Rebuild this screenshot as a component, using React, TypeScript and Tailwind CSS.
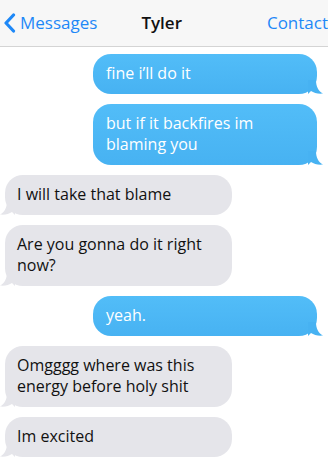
import React from "react"

type Msg = { from: "me" | "them"; text: string }

const messages: Msg[] = [
	{ from: "me", text: "fine i’ll do it" },
	{ from: "me", text: "but if it backfires im blaming you" },
	{ from: "them", text: "I will take that blame" },
	{ from: "them", text: "Are you gonna do it right now?" },
	{ from: "me", text: "yeah." },
	{ from: "them", text: "Omgggg where was this energy before holy shit" },
	{ from: "them", text: "Im excited" },
]

const font = { fontFamily: '"Open Sans", "Noto Sans", sans-serif' }

const Bubble: React.FC<{ msg: Msg }> = ({ msg }) => {
	if (msg.from === "me") {
		return (
			<div className="relative ml-[93px] w-[224px]">
				<div className="rounded-[18px] bg-gradient-to-b from-[#52bdf8] to-[#47b2f2] pl-[13px] pr-3 pt-[9px] pb-[10px] text-[16px] leading-[21px] text-white">
					{msg.text}
				</div>
				<svg className="absolute -right-[7px] bottom-0" width="16" height="14" viewBox="0 0 16 14">
					<path d="M0 0 L8 0 C8 6 10 11 15 13.5 C10 14 6 13 3 11 L0 14 Z" fill="#47b2f2" />
				</svg>
			</div>
		)
	}
	return (
		<div className="relative ml-[5px] w-[227px]">
			<div className="rounded-[18px] bg-[#e5e5ea] pl-3 pr-3 pt-[9px] pb-[10px] text-[16px] leading-[21px] text-[#111]">
				{msg.text}
			</div>
			<svg className="absolute -left-[6px] bottom-0" width="16" height="14" viewBox="0 0 16 14">
				<path d="M16 0 L8 0 C8 6 6 11 1 13.5 C6 14 10 13 13 11 L16 14 Z" fill="#e5e5ea" />
			</svg>
		</div>
	)
}

export default function App() {
	return (
		<div className="h-[458px] w-[328px] overflow-hidden bg-white" style={font}>
			<div className="flex h-[47px] items-center border-b border-[#d4d4d4] bg-[#f7f7f7] whitespace-nowrap">
				<div className="flex w-[142px] items-center text-[#1e88f7]">
					<svg className="ml-[3px]" width="13" height="20" viewBox="0 0 13 20">
						<path d="M10.5 2 L3 10 L10.5 18" fill="none" stroke="#1e88f7" strokeWidth="3.2" strokeLinecap="round" strokeLinejoin="round" />
					</svg>
					<span className="ml-[4px] text-[17px]">Messages</span>
				</div>
				<div className="w-[126px] text-[17px] font-semibold text-[#111]">Tyler</div>
				<div className="text-[17px] text-[#1e88f7]">Contact</div>
			</div>
			<div className="mt-[7px] flex flex-col gap-[10px]">
				{messages.map((m, i) => (
					<Bubble key={i} msg={m} />
				))}
			</div>
		</div>
	)
}
